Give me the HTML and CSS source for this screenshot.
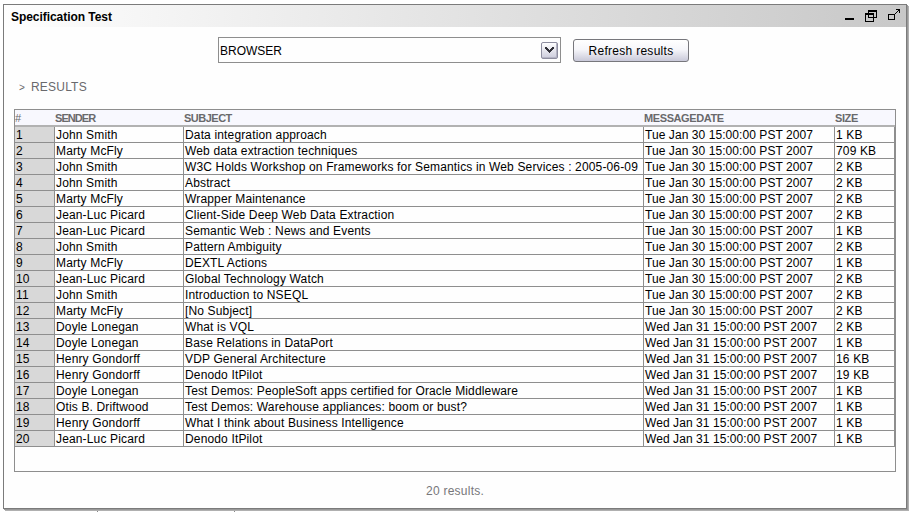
FILE: index.html
```html
<!DOCTYPE html>
<html lang="en">
<head>
<meta charset="utf-8">
<title>Specification Test</title>
<link rel="stylesheet" href="styles.css">
</head>
<body>
<main class="window">
  <header class="titlebar">
    <h1>Specification Test</h1>
    <svg class="controls" width="56" height="14" viewBox="0 0 56 14" shape-rendering="crispEdges">
      <path fill="#000" d="M1 9h9v2H1z"/>
      <path fill="none" stroke="#000" d="M24.500 1.500h8v7h-8zM24 2.500h9"/>
      <path fill="none" stroke="#000" d="M21.500 4.500h8v8h-8zM21 5.500h9"/>
      <path fill="none" stroke="#000" d="M44.500 5.500h6v5h-6z"/>
      <path fill="#000" d="M51 4h1v1h-1zM52 3h1v1h-1zM53 2h1v1h-1zM54 1h1v1h-1zM52 0h4v1h-4zM55 0h1v4h-1z"/>
    </svg>
  </header>
  <div class="toolbar">
    <div class="select"><span>BROWSER</span>
      <span class="drop"><svg width="9" height="7" viewBox="0 0 9 7" shape-rendering="crispEdges"><path fill="#303038" d="M0 0h2v1h1v1h1v1h1V2h1V1h1V0h2v2H8v1H7v1H6v1H5v1H4V5H3V4H2V3H1V2H0z"/></svg></span>
    </div>
    <button class="refresh">Refresh results</button>
  </div>
  <h2><span class="chevron">&gt;</span>RESULTS</h2>
  <section class="results">
    <div class="row head"><span>#</span><span>SENDER</span><span>SUBJECT</span><span>MESSAGEDATE</span><span>SIZE</span></div>
    <div class="row"><span>1</span><span>John Smith</span><span>Data integration approach</span><span>Tue Jan 30 15:00:00 PST 2007</span><span>1 KB</span></div>
    <div class="row"><span>2</span><span>Marty McFly</span><span>Web data extraction techniques</span><span>Tue Jan 30 15:00:00 PST 2007</span><span>709 KB</span></div>
    <div class="row"><span>3</span><span>John Smith</span><span>W3C Holds Workshop on Frameworks for Semantics in Web Services : 2005-06-09</span><span>Tue Jan 30 15:00:00 PST 2007</span><span>2 KB</span></div>
    <div class="row"><span>4</span><span>John Smith</span><span>Abstract</span><span>Tue Jan 30 15:00:00 PST 2007</span><span>2 KB</span></div>
    <div class="row"><span>5</span><span>Marty McFly</span><span>Wrapper Maintenance</span><span>Tue Jan 30 15:00:00 PST 2007</span><span>2 KB</span></div>
    <div class="row"><span>6</span><span>Jean-Luc Picard</span><span>Client-Side Deep Web Data Extraction</span><span>Tue Jan 30 15:00:00 PST 2007</span><span>2 KB</span></div>
    <div class="row"><span>7</span><span>Jean-Luc Picard</span><span>Semantic Web : News and Events</span><span>Tue Jan 30 15:00:00 PST 2007</span><span>1 KB</span></div>
    <div class="row"><span>8</span><span>John Smith</span><span>Pattern Ambiguity</span><span>Tue Jan 30 15:00:00 PST 2007</span><span>2 KB</span></div>
    <div class="row"><span>9</span><span>Marty McFly</span><span>DEXTL Actions</span><span>Tue Jan 30 15:00:00 PST 2007</span><span>1 KB</span></div>
    <div class="row"><span>10</span><span>Jean-Luc Picard</span><span>Global Technology Watch</span><span>Tue Jan 30 15:00:00 PST 2007</span><span>2 KB</span></div>
    <div class="row"><span>11</span><span>John Smith</span><span>Introduction to NSEQL</span><span>Tue Jan 30 15:00:00 PST 2007</span><span>2 KB</span></div>
    <div class="row"><span>12</span><span>Marty McFly</span><span>[No Subject]</span><span>Tue Jan 30 15:00:00 PST 2007</span><span>2 KB</span></div>
    <div class="row"><span>13</span><span>Doyle Lonegan</span><span>What is VQL</span><span>Wed Jan 31 15:00:00 PST 2007</span><span>2 KB</span></div>
    <div class="row"><span>14</span><span>Doyle Lonegan</span><span>Base Relations in DataPort</span><span>Wed Jan 31 15:00:00 PST 2007</span><span>1 KB</span></div>
    <div class="row"><span>15</span><span>Henry Gondorff</span><span>VDP General Architecture</span><span>Wed Jan 31 15:00:00 PST 2007</span><span>16 KB</span></div>
    <div class="row"><span>16</span><span>Henry Gondorff</span><span>Denodo ItPilot</span><span>Wed Jan 31 15:00:00 PST 2007</span><span>19 KB</span></div>
    <div class="row"><span>17</span><span>Doyle Lonegan</span><span>Test Demos: PeopleSoft apps certified for Oracle Middleware</span><span>Wed Jan 31 15:00:00 PST 2007</span><span>1 KB</span></div>
    <div class="row"><span>18</span><span>Otis B. Driftwood</span><span>Test Demos: Warehouse appliances: boom or bust?</span><span>Wed Jan 31 15:00:00 PST 2007</span><span>1 KB</span></div>
    <div class="row"><span>19</span><span>Henry Gondorff</span><span>What I think about Business Intelligence</span><span>Wed Jan 31 15:00:00 PST 2007</span><span>1 KB</span></div>
    <div class="row"><span>20</span><span>Jean-Luc Picard</span><span>Denodo ItPilot</span><span>Wed Jan 31 15:00:00 PST 2007</span><span>1 KB</span></div>
  </section>
  <p class="count">20 results.</p>
</main>
<div class="ticks"><i></i><i></i></div>
</body>
</html>
```
FILE: styles.css
```css
* { box-sizing: border-box; }
body {
  margin: 0;
  height: 512px;
  overflow: hidden;
  padding: 4px 0 0 3px;
  background: #fff;
  font: 12px "Liberation Sans", Arial, sans-serif;
  color: #000;
}
.window {
  width: 904px;
  height: 505px;
  border: 1px solid #7b7b7b;
  background: #fefefe;
  box-shadow: 1px 1px 0 #999, 2px 2px 0 #b0b0b0;
}
.titlebar {
  height: 22px;
  display: flex;
  justify-content: space-between;
  padding: 4px 6px 0 7px;
  background: linear-gradient(90deg, #fefefe, #c8c8c8);
}
h1 {
  margin: 0;
  font-size: 12px;
  line-height: 16px;
  letter-spacing: -0.05px;
}
.toolbar {
  height: 46px;
  display: flex;
  align-items: flex-start;
  gap: 12px;
  padding: 10px 0 0 214px;
}
.select {
  width: 343px;
  height: 26px;
  display: flex;
  align-items: center;
  justify-content: space-between;
  border: 1px solid #8e8e8e;
  padding: 0 2px 0 1px;
}
.select > span:first-child { padding-top: 1px; }
.drop {
  width: 17px;
  height: 17px;
  display: flex;
  align-items: center;
  justify-content: center;
  border: 1px solid #8e8ea0;
  border-radius: 2px;
  box-shadow: inset -1px -1px 0 #b4b4c4;
  background: linear-gradient(#fff, #ccccdc);
}
.refresh {
  width: 116px;
  height: 23px;
  margin-top: 2px;
  padding: 0;
  border: 1px solid #77777c;
  border-radius: 3px;
  background: linear-gradient(#fff 0%, #f6f6fa 45%, #c9c9d9 100%);
  font: 12px "Liberation Sans", Arial, sans-serif;
  letter-spacing: 0.28px;
  color: #000;
}
h2 {
  height: 36px;
  margin: 0;
  padding: 6px 0 0 15px;
  font-size: 12px;
  line-height: 16px;
  font-weight: 400;
  letter-spacing: 0.2px;
  color: #69696c;
}
.chevron {
  display: inline-block;
  width: 12px;
  font-size: 10px;
  letter-spacing: 0;
}
.results {
  width: 882px;
  height: 363px;
  margin-left: 10px;
  border: 1px solid #8e8e8e;
}
.row {
  display: grid;
  grid-template-columns: 40px 129px 460px 191px 60px;
  height: 16px;
  line-height: 15px;
  white-space: nowrap;
}
.row span {
  height: 16px;
  border-right: 1px solid #8e8e8e;
  border-bottom: 1px solid #8e8e8e;
  padding: 1px 0 0 1px;
  letter-spacing: 0.15px;
}
.row span:nth-child(4) { letter-spacing: 0.07px; }
.row span:first-child { background: #d8d8d8; }
.row.head {
  height: 17px;
  background: #f8f8fe;
  border-bottom: 2px solid #b2b2b2;
  color: #69696c;
  font-size: 11px;
  font-weight: 700;
  line-height: 16px;
}
.row.head span {
  height: 15px;
  border: 0;
  padding: 0;
  background: none;
  letter-spacing: -0.4px;
}
.row.head span:nth-child(3) { letter-spacing: -0.5px; }
.row.head span:first-child { font-weight: 400; }
.row.head span:nth-child(2) { letter-spacing: -0.95px; }
.count {
  margin: 12px 0 0;
  padding-left: 422px;
  line-height: 15px;
  letter-spacing: 0.25px;
  color: #77777a;
}
.ticks {
  display: flex;
  gap: 136px;
  padding: 2px 0 0 94px;
}
.ticks i {
  width: 1px;
  height: 1px;
  background: #888;
}
```
